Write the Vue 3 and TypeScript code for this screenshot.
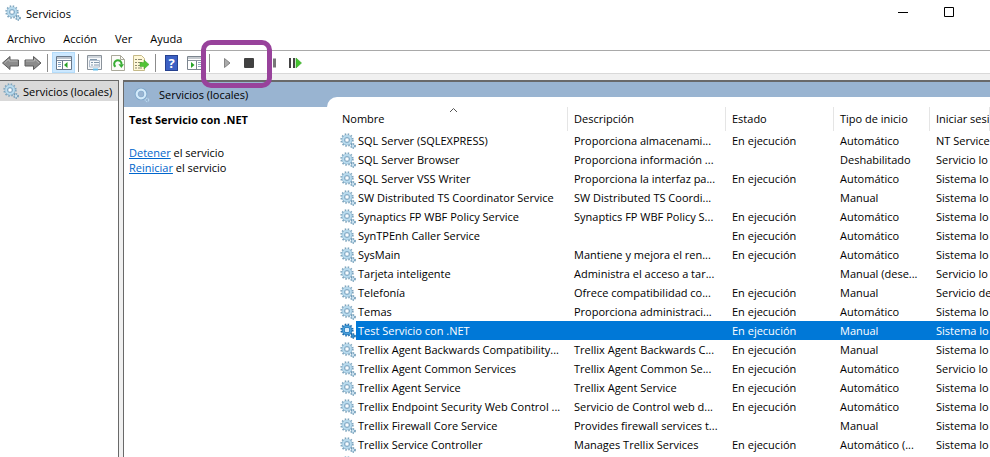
<script setup lang="ts">
interface Service {
  name: string
  description: string
  state: string
  startup: string
  logon: string
}

const RUNNING = 'En ejecución'

const service = (
  name: string,
  description: string,
  state: string,
  startup: string,
  logon: string,
): Service => ({ name, description, state, startup, logon })

const services: Service[] = [
  service('SQL Server (SQLEXPRESS)', 'Proporciona almacenami...', RUNNING, 'Automático', 'NT Service'),
  service('SQL Server Browser', 'Proporciona información ...', '', 'Deshabilitado', 'Servicio lo'),
  service('SQL Server VSS Writer', 'Proporciona la interfaz pa...', RUNNING, 'Automático', 'Sistema lo'),
  service('SW Distributed TS Coordinator Service', 'SW Distributed TS Coordi...', '', 'Manual', 'Sistema lo'),
  service('Synaptics FP WBF Policy Service', 'Synaptics FP WBF Policy S...', RUNNING, 'Automático', 'Sistema lo'),
  service('SynTPEnh Caller Service', '', RUNNING, 'Automático', 'Sistema lo'),
  service('SysMain', 'Mantiene y mejora el ren...', RUNNING, 'Automático', 'Sistema lo'),
  service('Tarjeta inteligente', 'Administra el acceso a tar...', '', 'Manual (dese...', 'Servicio lo'),
  service('Telefonía', 'Ofrece compatibilidad co...', RUNNING, 'Manual', 'Servicio de'),
  service('Temas', 'Proporciona administraci...', RUNNING, 'Automático', 'Sistema lo'),
  service('Test Servicio con .NET', '', RUNNING, 'Manual', 'Sistema lo'),
  service('Trellix Agent Backwards Compatibility...', 'Trellix Agent Backwards C...', RUNNING, 'Manual', 'Sistema lo'),
  service('Trellix Agent Common Services', 'Trellix Agent Common Se...', RUNNING, 'Automático', 'Servicio lo'),
  service('Trellix Agent Service', 'Trellix Agent Service', RUNNING, 'Automático', 'Sistema lo'),
  service('Trellix Endpoint Security Web Control ...', 'Servicio de Control web d...', RUNNING, 'Automático', 'Sistema lo'),
  service('Trellix Firewall Core Service', 'Provides firewall services t...', '', 'Manual', 'Sistema lo'),
  service('Trellix Service Controller', 'Manages Trellix Services', RUNNING, 'Automático (...', 'Sistema lo'),
  service('', '', '', '', ''),
]

const selected = 'Test Servicio con .NET'
const menus = ['Archivo', 'Acción', 'Ver', 'Ayuda']
</script>

<template>
  <div class="window">
    <svg class="defs" aria-hidden="true">
      <symbol id="gear" viewBox="0 0 16 16">
        <circle cx="7" cy="7" r="5.8" fill="none" stroke="#7fa6bf" stroke-width="1.8" stroke-dasharray="1.5 1.54" />
        <circle cx="7" cy="7" r="3.8" fill="none" stroke="#78a3be" stroke-width="3" />
        <circle cx="7" cy="7" r="3.8" fill="none" stroke="#b9dbee" stroke-width="2.2" />
        <circle cx="7" cy="7" r="2.2" fill="#fafdff" stroke="#6794b4" stroke-width=".7" />
        <circle cx="13" cy="13" r="2.1" fill="#a9cce1" stroke="#6390ad" stroke-width="1.4" stroke-dasharray="1.1 1.1" />
        <circle cx="13" cy="13" r=".8" fill="#f4faff" />
      </symbol>
      <symbol id="gear-selected" viewBox="0 0 16 16">
        <circle cx="7" cy="7" r="5.6" fill="none" stroke="#1b6cad" stroke-width="2" stroke-dasharray="1.5 1.43" />
        <circle cx="7" cy="7" r="3.8" fill="none" stroke="#2377b9" stroke-width="3" />
        <circle cx="7" cy="7" r="3.8" fill="none" stroke="#4ba1dc" stroke-width="1.6" />
        <circle cx="7" cy="7" r="2" fill="#d8efff" />
        <circle cx="13" cy="13" r="2.1" fill="#318ccc" stroke="#176199" stroke-width="1.4" stroke-dasharray="1.1 1.1" />
      </symbol>
    </svg>

    <header class="titlebar">
      <svg class="gear"><use href="#gear" /></svg>
      <h1>Servicios</h1>
      <div class="controls">
        <button type="button" aria-label="Minimizar">
          <svg width="12" height="12" viewBox="0 0 12 12"><path d="M1 5.500H11" stroke="#000" /></svg>
        </button>
        <button type="button" aria-label="Maximizar">
          <svg width="12" height="12" viewBox="0 0 12 12"><path d="M1.500 .5h9v9h-9z" fill="none" stroke="#000" /></svg>
        </button>
        <button type="button" aria-label="Cerrar">
          <svg width="12" height="12" viewBox="0 0 12 12"><path d="M1 0l10 10M11 0L1 10" stroke="#000" /></svg>
        </button>
      </div>
    </header>

    <nav class="menu">
      <button v-for="menu in menus" :key="menu" type="button">{{ menu }}</button>
    </nav>

    <div class="toolbar" role="toolbar" aria-label="Herramientas">
      <button type="button" class="nav" aria-label="Atrás">
        <svg width="18" height="16" viewBox="0 0 18 16"><path d="M.5 8L8 1.500V5h8.500v6H8v3.500z" fill="#8c8c8c" stroke="#5c5c5c" /><path d="M2.500 8l4.500-4V6H15.500" fill="none" stroke="#b4b4b4" /></svg>
      </button>
      <button type="button" class="nav" aria-label="Adelante">
        <svg width="18" height="16" viewBox="0 0 18 16"><path d="M17 8L9.500 1.500V5H1v6h8.500v3.500z" fill="#8c8c8c" stroke="#5c5c5c" /><path d="M2 6h8.500V4L15 8" fill="none" stroke="#b4b4b4" /></svg>
      </button>
      <span class="sep"></span>
      <button type="button" class="active" aria-label="Mostrar u ocultar árbol">
        <svg width="16" height="14" viewBox="0 0 16 14">
          <path d="M.5 .5h15v13H.5z" fill="#fff" stroke="#68788a" />
          <path d="M1 2h14M1 4.500h14" stroke="#77879a" />
          <path d="M6.500 5v8" stroke="#68788a" />
          <path d="M2 6.500h3M2 8.500h3M2 10.500h3" stroke="#7f9fc0" />
          <path d="M11.500 6v6L8 9z" fill="#28a428" />
        </svg>
      </button>
      <span class="sep"></span>
      <button type="button" aria-label="Propiedades">
        <svg width="16" height="16" viewBox="0 0 16 16">
          <path d="M.5 .5h14v14H.5z" fill="#f7f9fb" stroke="#8a929a" />
          <path d="M1 2h13" stroke="#aab4bf" />
          <path d="M3 4.500h7M4 7.500h2M7 7.500h5M4 10h2M7 10h5" stroke="#8498ac" />
          <path d="M2.500 5.500h10v6.500h-10z" fill="none" stroke="#b0bccb" />
          <path d="M6 14.500h5" stroke="#63bce8" stroke-width="2" />
        </svg>
      </button>
      <button type="button" aria-label="Actualizar">
        <svg width="14" height="16" viewBox="0 0 14 16">
          <path d="M.5 .5h9l4 4v11H.5z" fill="#fcfcf8" stroke="#aaa99a" />
          <path d="M9.500 .5v4h4" fill="none" stroke="#aaa99a" />
          <path d="M4.500 11.800A3.700 3.700 0 1 1 10.500 9.500" fill="none" stroke="#38ad32" stroke-width="2" />
          <path d="M7.500 9.200h5.500L10.400 13z" fill="#38ad32" />
        </svg>
      </button>
      <button type="button" aria-label="Exportar lista">
        <svg width="16" height="16" viewBox="0 0 16 16">
          <path d="M.5 .5h8l3 3v12H.5z" fill="#fff8d8" stroke="#c4b988" />
          <path d="M2 4.500h2M5 4.500h4M2 7.500h2M5 7.500h4M2 10.500h2M5 10.500h3M2 13h2M5 13h4" stroke="#8d8a70" />
          <path d="M7 7.500h4V5l5 4.500-5 4.500v-2.500H7z" fill="#52c335" stroke="#3da42a" stroke-width=".5" />
        </svg>
      </button>
      <span class="sep"></span>
      <button type="button" class="help" aria-label="Ayuda"><span>?</span></button>
      <button type="button" aria-label="Mostrar u ocultar panel de acciones">
        <svg width="16" height="14" viewBox="0 0 16 14">
          <path d="M.5 .5h15v13H.5z" fill="#fff" stroke="#7c858e" />
          <path d="M1 2h14M1 4.500h14" stroke="#8b949e" />
          <path d="M9.500 5v8" stroke="#7c858e" />
          <path d="M11 6.500h4M11 8.500h4M11 10.500h4" stroke="#93a7c0" />
          <path d="M4 6v6l3.500-3z" fill="#28a428" />
        </svg>
      </button>
      <span class="sep"></span>
      <button type="button" aria-label="Iniciar servicio">
        <svg width="16" height="12" viewBox="0 0 16 12"><path d="M6.500 1.500V10.500L12 6z" fill="#aaa" stroke="#858585" /></svg>
      </button>
      <button type="button" aria-label="Detener servicio">
        <svg width="12" height="12" viewBox="0 0 12 12"><rect x="1" y="1" width="10" height="10" rx="1" fill="#414141" /></svg>
      </button>
      <button type="button" aria-label="Pausar servicio">
        <svg width="12" height="12" viewBox="0 0 12 12"><path d="M3.500 1.500v9M8.500 1.500v9" stroke="#777" stroke-width="3" /></svg>
      </button>
      <button type="button" aria-label="Reiniciar servicio">
        <svg width="14" height="12" viewBox="0 0 14 12"><path d="M2 1v10M6 1v10" stroke="#444" stroke-width="2" /><path d="M8 1v10L13.500 6z" fill="#44c32e" stroke="#36a526" stroke-width=".6" /></svg>
      </button>
      <div class="highlight" aria-hidden="true"></div>
    </div>

    <main class="workspace">
      <aside class="tree">
        <div class="node"><svg class="gear"><use href="#gear" /></svg>Servicios (locales)</div>
      </aside>

      <section class="console">
        <div class="details">
          <div class="banner">
            <svg width="16" height="16" viewBox="0 0 16 16">
              <circle cx="7" cy="7" r="4.500" fill="none" stroke="#7ea7ca" stroke-width="3.600" />
              <circle cx="7" cy="7" r="4.300" fill="none" stroke="#d3eafa" stroke-width="2.200" />
              <circle cx="13" cy="13" r="1.700" fill="none" stroke="#b9d8ef" stroke-width="1.200" stroke-dasharray="1.300 .8" />
            </svg>
            Servicios (locales)
          </div>
          <div class="summary">
            <h2>{{ selected }}</h2>
            <p><a href="#detener">Detener</a> el servicio</p>
            <p><a href="#reiniciar">Reiniciar</a> el servicio</p>
          </div>
        </div>

        <div class="list">
          <table>
            <colgroup>
              <col class="c-icon" />
              <col class="c-name" />
              <col class="c-desc" />
              <col class="c-state" />
              <col class="c-start" />
              <col />
            </colgroup>
            <thead>
              <tr>
                <th colspan="2" class="sorted" aria-sort="ascending">
                  Nombre
                  <svg class="caret" width="9" height="6" viewBox="0 0 9 6"><path d="M1 5l3.500-3.500L8 5" fill="none" stroke="#555" /></svg>
                </th>
                <th>Descripción</th>
                <th>Estado</th>
                <th>Tipo de inicio</th>
                <th>Iniciar sesi</th>
              </tr>
            </thead>
            <tbody>
              <tr v-for="item in services" :key="item.name" :class="{ selected: item.name === selected }">
                <td class="icon">
                  <svg class="gear"><use :href="item.name === selected ? '#gear-selected' : '#gear'" /></svg>
                </td>
                <td class="name">{{ item.name }}</td>
                <td>{{ item.description }}</td>
                <td>{{ item.state }}</td>
                <td>{{ item.startup }}</td>
                <td>{{ item.logon }}</td>
              </tr>
            </tbody>
          </table>
        </div>
      </section>
    </main>
  </div>
</template>

<style>
body {
  margin: 0;
  overflow: hidden;
}
</style>

<style scoped>
* {
  box-sizing: border-box;
}
.window {
  display: flex;
  flex-direction: column;
  height: 100vh;
  overflow: hidden;
  background: #fff;
  color: #000;
  font-family: 'Open Sans', 'Noto Sans', sans-serif;
  font-size: 11px;
  line-height: 15px;
  white-space: nowrap;
}
.defs {
  position: absolute;
  width: 0;
  height: 0;
}
.gear {
  width: 16px;
  height: 16px;
  flex: none;
}
h1,
h2,
p {
  margin: 0;
  font-size: inherit;
}
h1 {
  font-weight: 400;
}
button {
  padding: 0;
  border: 0;
  background: none;
  color: inherit;
  font: inherit;
}
.titlebar {
  display: flex;
  align-items: center;
  flex: none;
  gap: 5px;
  height: 26px;
  padding-left: 5px;
}
.controls {
  display: flex;
  margin-left: auto;
  margin-right: -28px;
}
.controls button {
  display: grid;
  place-items: center;
  width: 46px;
  height: 26px;
}
.menu {
  display: flex;
  flex: none;
  gap: 18px;
  height: 24px;
  padding-left: 7px;
}
.toolbar {
  position: relative;
  display: flex;
  align-items: center;
  flex: none;
  height: 24px;
  padding-top: 1px;
  border-top: 1px solid #a9a9a9;
  border-bottom: 1px solid #d9d9d9;
}
.toolbar button {
  display: grid;
  place-items: center;
  width: 23px;
  height: 21px;
}
.toolbar .nav {
  width: 22px;
}
.toolbar .active {
  border: 1px solid #b4dcfa;
  background: #cce8ff;
}
.sep {
  width: 1px;
  height: 18px;
  margin: 0 4px 0 3px;
  background: #8c8c8c;
}
.help span {
  width: 13px;
  height: 16px;
  border: 1px solid #26418f;
  background: #3c61c4;
  color: #fff;
  font-size: 13px;
  font-weight: 700;
  line-height: 14px;
}
.highlight {
  position: absolute;
  top: -11px;
  left: 201px;
  width: 71px;
  height: 48px;
  border: 5px solid #98429b;
  border-radius: 10px;
  pointer-events: none;
}
.workspace {
  display: flex;
  flex: 1;
  min-height: 0;
  padding-top: 6px;
  background: #f0f0f0;
}
.tree {
  flex: none;
  width: 119px;
  border-top: 1px solid #696969;
  border-right: 1px solid #696969;
  background: #fff;
}
.node {
  display: flex;
  align-items: center;
  gap: 4px;
  height: 20px;
  padding-left: 3px;
  background: #d9d9d9;
}
.console {
  display: flex;
  flex: 1;
  min-width: 0;
  margin-left: 4px;
  border-top: 2px solid #696969;
  border-left: 1px solid #696969;
  background: #99b4d1;
}
.details {
  display: flex;
  flex-direction: column;
  flex: none;
  width: 203px;
}
.banner {
  display: flex;
  align-items: center;
  gap: 9px;
  height: 25px;
  padding-left: 10px;
}
.summary {
  flex: 1;
  padding: 5px;
  background: #fff;
}
.summary h2 {
  margin-bottom: 18px;
}
a {
  color: #0066cc;
  text-decoration: underline;
}
.list {
  flex: 1;
  min-width: 0;
  margin-top: 15px;
  padding: 10px 0 0 9px;
  overflow: hidden;
  border-top-left-radius: 10px;
  background: #fff;
}
table {
  width: 100%;
  table-layout: fixed;
  border-collapse: separate;
  border-spacing: 0;
}
.c-icon {
  width: 20px;
}
.c-name {
  width: 212px;
}
.c-desc {
  width: 158px;
}
.c-state {
  width: 108px;
}
.c-start {
  width: 96px;
}
th,
td {
  height: 19px;
  padding: 0 0 0 6px;
  overflow: hidden;
  text-align: left;
  font-weight: 400;
}
th {
  position: relative;
  height: 24px;
  padding-bottom: 2px;
  border-right: 1px solid #e5e5e5;
}
.caret {
  position: absolute;
  top: 0;
  left: 49%;
}
.icon {
  padding: 0 0 0 4px;
}
.icon svg {
  display: block;
}
.name {
  padding-left: 2px;
}
.selected td:not(.icon) {
  background: #0078d7;
  color: #fff;
}
</style>
